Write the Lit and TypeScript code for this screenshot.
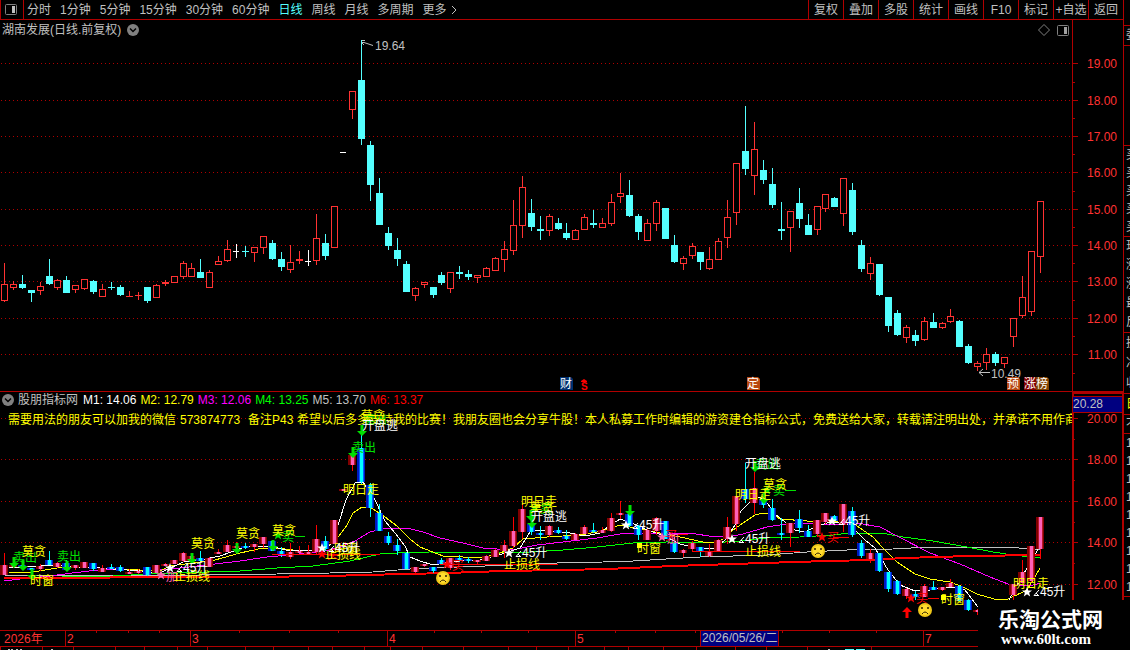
import { LitElement, html, svg, css } from "lit";
import { customElement } from "lit/decorators.js";
import { classMap } from "lit/directives/class-map.js";

type Kind = "r" | "c" | "w";
// wick top, body top, body bottom, wick bottom, kind (r = up, c = down, w = flat)
type Bar = [number, number, number, number, Kind];
type Mark = [number, number, string, string];

const BARS: Bar[] = [
  [263, 284, 301, 302, "r"], [281, 284, 288, 290, "r"], [275, 284, 288, 289, "c"], [290, 290, 293, 302, "c"],
  [282, 286, 291, 295, "r"], [259, 276, 284, 285, "c"], [279, 280, 288, 290, "r"], [276, 280, 293, 293, "c"],
  [285, 285, 290, 293, "r"], [279, 279, 289, 290, "r"], [280, 281, 292, 294, "c"], [284, 289, 297, 297, "r"],
  [282, 287, 288, 290, "c"], [285, 287, 295, 296, "c"], [291, 296, 297, 297, "r"], [292, 295, 296, 300, "r"],
  [287, 287, 301, 303, "c"], [284, 285, 298, 298, "r"], [280, 282, 284, 286, "r"], [276, 276, 283, 283, "r"],
  [261, 263, 277, 279, "r"], [263, 268, 277, 277, "r"], [259, 272, 278, 278, "c"], [270, 272, 288, 288, "r"],
  [256, 261, 265, 265, "r"], [240, 249, 261, 262, "r"], [244, 251, 252, 258, "w"], [246, 251, 252, 257, "c"],
  [247, 247, 253, 262, "r"], [236, 236, 248, 254, "r"], [240, 243, 259, 260, "c"], [252, 259, 267, 271, "c"],
  [245, 262, 270, 273, "r"], [251, 259, 261, 264, "r"], [250, 261, 262, 266, "w"], [214, 238, 261, 265, "r"],
  [234, 243, 256, 260, "c"], [206, 206, 248, 248, "r"], [152, 152, 153, 153, "w"], [91, 91, 110, 119, "r"],
  [40, 80, 139, 145, "c"], [141, 145, 185, 201, "c"], [178, 193, 225, 225, "c"], [227, 233, 246, 250, "c"],
  [238, 250, 259, 266, "c"], [261, 264, 292, 292, "c"], [287, 288, 296, 301, "r"], [282, 282, 285, 288, "r"],
  [287, 287, 295, 298, "c"], [272, 275, 283, 285, "c"], [272, 272, 289, 293, "r"], [266, 272, 274, 279, "c"],
  [270, 274, 277, 280, "c"], [275, 275, 278, 283, "r"], [267, 268, 277, 277, "r"], [257, 258, 271, 271, "r"],
  [241, 249, 260, 272, "r"], [200, 225, 251, 255, "r"], [176, 187, 226, 238, "r"], [199, 213, 227, 231, "c"],
  [216, 229, 231, 240, "c"], [214, 216, 231, 236, "r"], [218, 223, 229, 230, "c"], [223, 233, 238, 240, "c"],
  [229, 230, 240, 240, "r"], [214, 217, 230, 230, "r"], [210, 223, 225, 228, "c"], [218, 223, 228, 228, "r"],
  [194, 202, 224, 226, "r"], [173, 193, 197, 203, "r"], [180, 195, 216, 217, "c"], [214, 216, 232, 240, "c"],
  [219, 223, 241, 241, "r"], [200, 202, 224, 231, "r"], [208, 208, 239, 239, "c"], [235, 245, 262, 263, "c"],
  [256, 258, 264, 270, "r"], [243, 246, 256, 259, "r"], [252, 252, 262, 270, "c"], [247, 259, 269, 270, "r"],
  [238, 241, 260, 260, "r"], [200, 217, 238, 248, "r"], [163, 163, 213, 225, "r"], [106, 151, 169, 175, "c"],
  [122, 149, 176, 195, "r"], [160, 170, 180, 184, "c"], [168, 184, 205, 208, "c"], [202, 229, 231, 240, "c"],
  [211, 211, 228, 252, "r"], [188, 203, 219, 228, "c"], [214, 225, 235, 235, "c"], [206, 206, 230, 235, "r"],
  [194, 194, 209, 212, "r"], [197, 198, 207, 207, "c"], [178, 178, 214, 226, "r"], [183, 190, 232, 235, "c"],
  [240, 245, 269, 272, "c"], [257, 263, 274, 280, "r"], [264, 264, 295, 296, "c"], [297, 297, 326, 332, "c"],
  [310, 313, 335, 336, "c"], [325, 327, 338, 343, "r"], [330, 335, 341, 346, "c"], [317, 321, 340, 341, "r"],
  [313, 322, 328, 328, "c"], [322, 323, 328, 329, "r"], [309, 316, 322, 323, "r"], [320, 321, 347, 347, "c"],
  [344, 346, 363, 364, "c"], [361, 363, 367, 371, "r"], [348, 354, 363, 370, "r"], [352, 354, 363, 366, "c"],
  [357, 357, 364, 368, "r"], [318, 318, 337, 347, "r"], [276, 297, 316, 318, "r"], [251, 251, 312, 316, "r"],
  [201, 201, 257, 273, "r"],
];

const AVERAGES: [string, string][] = [
  ["m5", "5,575 110,575 200,575 277,574 330,573 373,572 410,569 457,567 513,565 557,563 603,562 633,561 700,557 767,555 807,552 847,550 893,549 930,547 1010,547 1027,549 1040,549"],
  ["m4", "62,577 113,576 150,574 207,572 240,571 277,568 313,566 350,561 380,554 397,553 430,552 480,553 530,552 563,550 597,547 633,543 667,542 710,543 740,541 767,538 800,537 833,535 850,533 887,534 903,537 933,541 967,547 993,552 1013,555 1040,558"],
  ["m3", "4,581 20,579 50,576 72,573 107,569 147,571 180,568 215,564 240,561 267,557 290,555 325,551 340,547 355,541 370,532 387,528 407,528 423,532 440,538 463,543 483,548 497,549 517,549 537,545 563,542 597,538 620,534 640,533 690,533 715,537 733,536 743,534 767,527 780,525 803,523 833,525 857,523 880,527 897,536 930,553 960,564 990,577 1008,584 1030,586 1040,583"],
  ["m2", "9,573 33,572 63,567 100,568 140,570 160,571 170,566 200,562 215,560 240,553 263,548 285,549 300,551 325,549 339,536 347,525 353,513 362,507 370,507 385,517 397,526 410,539 420,547 443,556 463,557 482,558 500,553 513,548 523,539 547,537 580,535 597,532 620,525 640,529 680,537 703,542 717,542 725,538 733,530 743,523 755,515 763,513 772,514 780,519 807,521 833,521 857,526 873,537 883,548 897,562 915,574 930,579 950,582 963,587 977,594 994,599 1008,599 1027,590 1033,580 1040,568"],
  ["m1", "9,568 40,566 55,565 75,567 100,568 140,571 160,573 183,562 200,560 220,556 245,547 270,546 290,551 317,550 330,545 339,522 346,500 355,483 363,482 375,500 385,521 395,533 405,546 410,557 420,561 433,565 445,563 460,561 480,560 495,556 505,553 520,548 530,532 540,530 550,531 570,533 585,536 600,533 612,524 620,519 630,522 640,527 650,531 665,536 680,544 700,549 715,548 725,540 735,525 741,511 750,502 756,496 765,500 775,514 785,522 795,530 805,532 815,527 830,522 845,523 855,530 865,540 875,548 888,570 900,585 915,591 930,590 950,587 965,590 978,607 1005,607 1020,580 1035,555 1040,545"],
  ["m6", "4,578 100,578 120,577 250,577 330,576 363,575 407,574 447,573 503,571 563,570 607,569 673,566 763,563 827,561 873,560 903,558 970,556 1040,555"],
];

// x, y, text, colour class
const LABELS: Mark[] = [
  [13, 557, "卖出", "green"], [22, 551, "莫贪", "yellow"], [30, 580, "时窗", "yellow"], [57, 556, "卖出", "green"],
  [166, 576, "加", "pink"], [174, 576, "止损线", "yellow"], [191, 543, "莫贪", "yellow"], [236, 533, "莫贪", "yellow"],
  [282, 536, "卖", "green"], [272, 530, "莫贪", "yellow"], [327, 554, "买", "red"], [325, 554, "止损线", "yellow"],
  [334, 548, "时窗", "yellow"], [363, 419, "卖出", "green"], [361, 415, "莫贪", "yellow"], [362, 425, "开盘逃", "white"],
  [352, 447, "卖出", "green"], [343, 489, "明日走", "yellow"], [452, 565, "买", "red"], [521, 501, "明日走", "yellow"],
  [540, 508, "卖", "green"], [530, 507, "莫贪", "yellow"], [531, 516, "开盘逃", "white"], [504, 564, "止损线", "yellow"],
  [665, 535, "买", "red"], [667, 538, "加", "pink"], [637, 548, "时窗", "yellow"], [755, 464, "卖出", "green"],
  [745, 463, "开盘逃", "white"], [773, 490, "卖", "green"], [763, 484, "莫贪", "yellow"], [735, 494, "明日走", "yellow"],
  [745, 551, "止损线", "yellow"], [827, 537, "买", "red"], [916, 598, "买", "red"], [941, 599, "时窗", "yellow"],
  [1013, 583, "明日走", "yellow"],
];
const STARS: [number, number, string][] = [
  [161, 575, "pink"], [278, 535, "green"], [322, 554, "red"], [447, 564, "red"], [535, 508, "green"],
  [662, 537, "pink"], [767, 490, "green"], [822, 537, "red"], [911, 598, "red"],
];
const RISES: [number, number][] = [[170, 568], [322, 548], [509, 553], [626, 525], [732, 539], [832, 521], [1027, 592]];
const ARROWS: [number, number][] = [
  [14, 563], [23, 566], [32, 575], [67, 567], [192, 559], [237, 549], [273, 546], [362, 431], [353, 453],
  [531, 516], [532, 523], [630, 511], [755, 467], [764, 499],
];
const FACES: [number, number][] = [[443, 578], [818, 551], [925, 610]];
const RAYS: [number, number, number, string][] = [
  [272, 380, 554, "red"], [440, 558, 564, "red"], [668, 688, 534, "red"], [692, 800, 551, "red"],
  [833, 849, 537, "red"], [928, 939, 598, "red"], [295, 305, 536, "green"], [785, 796, 490, "green"],
];
const NOTE: [number, string][] = [
  [8, "需要用法的朋友可以加我的微信"],
  [180, "573874773"],
  [248, "备注P43"],
  [297, "希望以后多多支持我的比赛！我朋友圈也会分享牛股！本人私募工作时编辑的游资建仓指标公式，免费送给大家，转载请注明出处，并承诺不用作商"],
];
const BADGES: Mark[] = [
  [560, 377, "财", "#003070"], [747, 377, "定", "#b84810"], [1007, 377, "预", "#b84810"],
  [1024, 377, "涨", "#800000"], [1036, 377, "榜", "#804000"],
];
const PRICE_GRID = [63, 100, 136, 172, 209, 245, 281, 318, 354];
const STUDY_GRID = [418, 459, 501, 542, 584];
const PERIODS = ["分时", "1分钟", "5分钟", "15分钟", "30分钟", "60分钟", "日线", "周线", "月线", "多周期"];
const TOOLS = ["复权", "叠加", "多股", "统计", "画线", "F10", "标记", "+自选", "返回"];
const READOUTS: [string, string][] = [
  ["M1: 14.06", "white"], ["M2: 12.79", "yellow"], ["M3: 12.06", "magenta"],
  ["M4: 13.25", "lime"], ["M5: 13.70", "silver"], ["M6: 13.37", "red"],
];
const MONTHS: [number, string][] = [[65, "2"], [190, "3"], [387, "4"], [575, "5"], [923, "7"]];
const WEEK_TICKS = [96, 128, 159, 239, 289, 338, 434, 481, 528, 615, 655, 695, 782, 829, 876];
const FOOT_TICKS = [0, 42, 73, 115, 144, 177, 207, 245, 273, 308, 332, 364, 390, 422, 463, 508, 536, 568, 604, 628, 663, 696, 735, 766, 807, 871];

const barX = (i: number) => Math.floor(4.4 + 8.93 * i);
const toStudy = (y: number) => Math.round(438.8 + (y - 63.3) * 0.5714);
const STAR = "M0 -5 1.3 -1.6 5 -1.6 2.1 .7 3.2 4.4 0 2.2 -3.2 4.4 -2.1 .7 -5 -1.6 -1.3 -1.6Z";

const chevronBadge = html`<svg class="round" width="12" height="12" viewBox="0 0 12 12" aria-hidden="true">
  <circle cx="6" cy="6" r="6" fill="#808080"></circle>
  <path d="M3 4.5 6 7.5 9 4.5" fill="none" stroke="#000" stroke-width="1.5"></path>
</svg>`;

@customElement("price-chart")
export class PriceChart extends LitElement {
  static styles = css`
    :host { display: block; background: #000; }
    svg { display: block; width: 100%; overflow: hidden; }
    .crisp { shape-rendering: crispEdges; }
    .grid { stroke: #b00000; stroke-dasharray: 1 3; }
    .r { fill: #ff3232; } .c { fill: #54ffff; } .w { fill: #fff; }
    .hollow { fill: #000; stroke: #ff3232; }
    text { font: 12px "Liberation Sans", "Noto Sans CJK SC", sans-serif; fill: #c0c0c0; }
    .badge { fill: #fff; }
    .dollar { fill: #f00; font-size: 10px; font-weight: bold; }
    .pointer { fill: none; stroke: #c0c0c0; }
  `;

  private bar([hi, top, bot, lo, kind]: Bar, i: number) {
    const x = barX(i);
    const hollow = kind === "r" && bot - top > 2;
    return svg`<g>
      <rect class=${kind} x=${x} y=${hi} width="1" height=${lo - hi}></rect>
      ${hollow
        ? svg`<rect class="hollow" x=${x - 2.5} y=${top + 0.5} width="6" height=${bot - top - 1}></rect>`
        : svg`<rect class=${kind} x=${x - 3} y=${top} width=${kind === "w" ? 6 : 7} height=${bot - top}></rect>`}
    </g>`;
  }

  render() {
    return html`<svg height="351" role="img" aria-label="日线">
      <g transform="translate(0 -40)">
        <g class="crisp">
          ${PRICE_GRID.map((y) => svg`<line class="grid" x1="1" x2="100%" y1=${y + 0.5} y2=${y + 0.5}></line>`)}
          ${BARS.map((b, i) => this.bar(b, i))}
        </g>
        <path class="pointer" d="M362 40.5h3M362 42.5h2l9 3M362 43l2 2"></path>
        <text x="375" y="50">19.64</text>
        <path class="pointer" d="M990 372.5H979M983 369l-4 3.5 4 3.5"></path>
        <text x="991" y="378">10.49</text>
        ${BADGES.map(([x, y, t, c]) => svg`<g>
          <path d="M${x} ${y}h11l2 2v11h-13z" fill=${c}></path>
          <text class="badge" x=${x} y=${y + 11}>${t}</text></g>`)}
        <path d="M581 381l3-2 3 2v1h-6z" fill="#f00"></path>
        <text class="dollar" x="581" y="390">S</text>
      </g>
    </svg>`;
  }
}

@customElement("study-chart")
export class StudyChart extends LitElement {
  static styles = css`
    :host { display: block; background: #000; }
    svg { display: block; width: 100%; overflow: hidden; }
    .crisp { shape-rendering: crispEdges; }
    .grid { stroke: #b00000; stroke-dasharray: 1 3; }
    text { font: 12px "Liberation Sans", "Noto Sans CJK SC", sans-serif; }
    .note { fill: #ff0; }
    polyline { fill: none; }
    .m1 { stroke: #fff; } .m2 { stroke: #ff0; } .m3 { stroke: #f0f; }
    .m4 { stroke: #0f0; } .m5 { stroke: #c0c0c0; } .m6 { stroke: #f00; stroke-width: 2; }
    .green { fill: #00e000; } .yellow { fill: #ff0; } .red { fill: #f00; }
    .white { fill: #fff; } .pink { fill: #ff60b0; }
    .up-edge { fill: #800000; } .up-mid { fill: #b81828; } .up-core { fill: #ff60b8; } .up-wick { fill: #f00; }
    .down-edge { fill: #0018c0; } .down-mid { fill: #0060ff; } .down-core { fill: #00ffff; } .down-wick { fill: #00ffff; }
    .angle { fill: none; stroke: #fff; }
  `;

  private bar([hi, top, bot, lo, kind]: Bar, i: number) {
    const x = barX(i);
    const dir = kind === "c" ? "down" : "up";
    const y = toStudy(top);
    const h = Math.max(2, toStudy(bot) - y);
    const wick = toStudy(hi);
    return svg`<g>
      <rect class="${dir}-wick" x=${x} y=${wick} width="1" height=${Math.max(1, toStudy(lo) - wick)}></rect>
      <rect class="${dir}-edge" x=${x - 4} y=${y} width="8" height=${h}></rect>
      <rect class="${dir}-mid" x=${x - 2} y=${y} width="5" height=${h}></rect>
      <rect class="${dir}-core" x=${x - 1} y=${y} width="3" height=${h}></rect>
    </g>`;
  }

  render() {
    return html`<svg height="222" role="img" aria-label="股朋指标网">
      <g transform="translate(0 -408)">
        <g class="crisp">
          ${STUDY_GRID.map((y) => svg`<line class="grid" x1="1" x2="100%" y1=${y + 0.5} y2=${y + 0.5}></line>`)}
          ${AVERAGES.map(([c, p]) => svg`<polyline class=${c} points=${p}></polyline>`)}
          ${BARS.map((b, i) => this.bar(b, i))}
          ${RAYS.map(([a, b, y, c]) => svg`<rect class=${c} x=${a} y=${y} width=${b - a} height="1"></rect>`)}
        </g>
        ${NOTE.map(([x, t]) => svg`<text class="note" x=${x} y="424">${t}</text>`)}
        ${ARROWS.map(([x, y]) => svg`<path class="green" transform="translate(${x} ${y})" d="M-1.5 -6h3V0H5L0 5 -5 0h3.500z"></path>`)}
        <path class="red" d="M907 607l5 5h-3.500v6h-3v-6h-3.500z"></path>
        <rect class="yellow" x="637" y="543" width="5" height="5"></rect>
        <rect class="yellow" x="941" y="595" width="5" height="5"></rect>
        ${STARS.map(([x, y, c]) => svg`<path class=${c} transform="translate(${x} ${y})" d=${STAR}></path>`)}
        ${LABELS.map(([x, y, t, c]) => svg`<text class=${c} x=${x} y=${y + 5}>${t}</text>`)}
        ${RISES.map(([x, y]) => svg`<g transform="translate(${x} ${y})">
          <path class="white" d=${STAR}></path>
          <path class="angle" d="M12 -2 7 3.500h5M9 1l2 2"></path>
          <text class="white" x="13" y="4">45升</text></g>`)}
        ${FACES.map(([x, y]) => svg`<g transform="translate(${x} ${y})">
          <circle r="7" fill="#f0c818"></circle><circle r="5" fill="#ffdc30"></circle>
          <circle cx="-3" cy="-2" r="1" fill="#302000"></circle><circle cx="3" cy="-2" r="1" fill="#302000"></circle>
          <path d="M-3 4Q0 0 3 4" fill="none" stroke="#302000"></path></g>`)}
      </g>
    </svg>`;
  }
}

@customElement("value-scale")
export class ValueScale extends LitElement {
  static styles = css`
    :host { display: block; background: #000; }
    svg { display: block; width: 100%; overflow: hidden; }
    .rule { fill: #b00000; shape-rendering: crispEdges; }
    .cursor { fill: #000080; }
    text { font: 12px "Liberation Sans", sans-serif; fill: #ff3232; text-anchor: end; }
    .cursor-value { fill: #c0c0c0; text-anchor: start; }
  `;

  private scale(ys: number[], first: number, step: number) {
    return ys.map((y, i) => svg`
      <rect class="rule" x="1" y=${y} width="5" height="1"></rect>
      <rect class="rule" x="1" y=${Math.round((y + (ys[i + 1] ?? y + 37)) / 2)} width="2" height="1"></rect>
      <text x="45" y=${y + 5}>${(first - i * step).toFixed(2)}</text>`);
  }

  render() {
    return html`<svg height="610" role="img" aria-label="坐标">
      <g transform="translate(0 -20)">
        <rect class="rule" x="0" y="20" width="1" height="610"></rect>
        ${this.scale(PRICE_GRID, 19, 1)}
        ${this.scale(STUDY_GRID, 20, 2)}
        <rect class="rule" x="0" y="391" width="51" height="3"></rect>
        <rect class="rule" x="0" y="391" width="2" height="239"></rect>
        <rect class="rule" x="50" y="391" width="1" height="239"></rect>
        <rect class="rule" x="0" y="396" width="51" height="17"></rect>
        <rect class="cursor" x="1" y="397" width="49" height="15"></rect>
        <text class="cursor-value" x="1" y="408">20.28</text>
      </g>
    </svg>`;
  }
}

@customElement("quote-strip")
export class QuoteStrip extends LitElement {
  static styles = css`
    :host { display: block; overflow: hidden; border-left: 1px solid #b00000; color: #c0c0c0;
      font: 12px/18px "Liberation Sans", "Noto Sans CJK SC", sans-serif; white-space: nowrap; }
    .cell { border-bottom: 1px solid #b00000; padding-left: 2px; }
    .top { height: 25px; }
    .gap { height: 99px; }
    .head { line-height: 19px; }
    .lit { color: #ff0; line-height: 20px; }
    .row { display: block; }
    .tall { line-height: 19px; }
    .loose { line-height: 20px; }
  `;

  private rows(text: string) {
    return [...text].map((t) => html`<span class="row">${t}</span>`);
  }

  render() {
    return html`
      <div class="cell top"></div>
      <div class="cell head">委</div>
      <div class="cell gap"></div>
      <div class="cell">${this.rows("买买买买买")}</div>
      <div class="cell tall">${this.rows("现涨涨最反")}</div>
      <div class="cell loose">${this.rows("换净收")}</div>
      <div class="cell lit">日</div>
      <div class="cell">不</div>
      <div class="cell">${this.rows("111111111")}</div>`;
  }
}

@customElement("app-root")
export class AppRoot extends LitElement {
  static styles = css`
    :host { display: grid; grid-template-columns: minmax(0, 1fr) 7px; position: relative; height: 100vh; overflow: hidden;
      background: #000; color: #c0c0c0; font: 12px/18px "Liberation Sans", "Noto Sans CJK SC", sans-serif; }
    .main { display: flex; flex-direction: column; min-width: 0; }
    .bar { display: flex; height: 19px; border-bottom: 1px solid #b00000; flex: none; }
    button { all: unset; cursor: pointer; white-space: nowrap; line-height: 18px; }
    .dock { display: flex; align-items: center; width: 19px; padding-left: 3px; border: solid #b00000; border-width: 0 1px; }
    .periods { display: flex; gap: 9px; padding-left: 3px; flex: 1; min-width: 0; overflow: hidden; }
    .periods .active { color: #54ffff; }
    .more { display: flex; align-items: center; gap: 4px; }
    .tools { display: grid; grid-template-columns: repeat(9, 35px); }
    .tool { border-left: 1px solid #b00000; text-align: center; }
    .work { display: grid; grid-template-columns: minmax(0, 1fr) 51px; flex: none; }
    .title { display: flex; align-items: center; gap: 6px; height: 20px; padding: 0 3px 0 2px; }
    .fill { flex: 1; }
    .corner { display: flex; align-items: center; gap: 7px; }
    .study { border-top: 1px solid #b00000; }
    .readouts { display: flex; align-items: center; height: 16px; padding-left: 2px; gap: 4px; white-space: nowrap; }
    .round { display: block; flex: none; }
    .name { min-width: 61px; }
    .white { color: #fff; } .yellow { color: #ff0; } .magenta { color: #f0f; }
    .lime { color: #0f0; } .silver { color: #c0c0c0; } .red { color: #f00; }
    .dates { display: block; width: 100%; flex: none; }
    .rule { fill: #b00000; shape-rendering: crispEdges; }
    .faint { fill: #c0c0c0; shape-rendering: crispEdges; }
    .aqua { fill: #54ffff; shape-rendering: crispEdges; }
    .cursor { fill: #000080; stroke: #b00000; shape-rendering: crispEdges; }
    .month { font: 12px "Liberation Sans", "Noto Sans CJK SC", sans-serif; fill: #ff3232; }
    .day { font: 12px "Liberation Sans", "Noto Sans CJK SC", sans-serif; fill: #c0c0c0; }
    .brand { position: absolute; right: 0; bottom: 0; width: 132px; height: 46px; padding: 4px 0 0 20px; background: #000; color: #fff; }
    .brand-name { display: block; font: bold 21px/28px "Noto Sans CJK SC", sans-serif; }
    .brand-url { display: block; padding-left: 3px; font: bold 15px/14px "Liberation Serif", serif; color: #fff; text-decoration: none; }
  `;

  private dates() {
    return html`<svg class="dates" height="20" role="img" aria-label="日期">
      <rect class="rule" x="0" y="0" width="100%" height="1"></rect>
      <rect class="rule" x="0" y="16" width="100%" height="1"></rect>
      ${MONTHS.map(([x, t]) => svg`<rect class="rule" x=${x} y="0" width="1" height="16"></rect>
        <text class="month" x=${x + 2} y="13">${t}</text>`)}
      ${WEEK_TICKS.map((x) => svg`<rect class="rule" x=${x} y="1" width="1" height="2"></rect>`)}
      ${FOOT_TICKS.map((x) => svg`<rect class="rule" x=${x} y="17" width="1" height="3"></rect>`)}
      ${[8, 11, 16, 20, 51, 828].map((x) => svg`<rect class="faint" x=${x} y="19" width="2" height="1"></rect>`)}
      ${[845, 856].map((x) => svg`<rect class="aqua" x=${x} y="19" width="9" height="1"></rect>`)}
      <text class="month" x="4" y="13">2026年</text>
      <rect class="cursor" x="700.5" y="0.5" width="78" height="16"></rect>
      <text class="day" x="702" y="12">2026/05/26/二</text>
    </svg>`;
  }

  render() {
    return html`
      <div class="main">
        <header class="bar">
          <button class="dock" aria-label="侧栏">
            <svg width="14" height="12" viewBox="0 0 14 12">
              <rect x="1.5" y=".5" width="11" height="10" rx="1" fill="none" stroke="#808080"></rect>
              <rect x="8" y="2" width="3" height="7" fill="#c0c0c0"></rect>
            </svg>
          </button>
          <nav class="periods">
            ${PERIODS.map((p) => html`<button class=${classMap({ active: p === "日线" })}>${p}</button>`)}
            <button class="more">更多<svg width="6" height="10" viewBox="0 0 6 10"><path d="M1 1l4 4-4 4" fill="none" stroke="#c0c0c0"></path></svg></button>
          </nav>
          <div class="tools">${TOOLS.map((t) => html`<button class="tool">${t}</button>`)}</div>
        </header>
        <div class="work">
          <div class="panes">
            <div class="title">
              <span>湖南发展(日线.前复权)</span>${chevronBadge}
              <span class="fill"></span>
              <span class="corner">
                <svg width="12" height="12" viewBox="0 0 12 12"><path d="M6 .5 11.500 6 6 11.500 .5 6Z" fill="none" stroke="#808080"></path></svg>
                <svg width="12" height="11" viewBox="0 0 12 11">
                  <rect x=".5" y=".5" width="11" height="10" rx="1" fill="none" stroke="#808080"></rect>
                  <rect x="7" y="2" width="3" height="7" fill="#a0a0a0"></rect>
                </svg>
              </span>
            </div>
            <price-chart></price-chart>
            <div class="study">
              <div class="readouts">
                ${chevronBadge}<span class="name">股朋指标网</span>
                ${READOUTS.map(([t, c]) => html`<span class=${c}>${t}</span>`)}
              </div>
              <study-chart></study-chart>
            </div>
          </div>
          <value-scale></value-scale>
        </div>
        ${this.dates()}
      </div>
      <quote-strip></quote-strip>
      <div class="brand">
        <span class="brand-name">乐淘公式网</span>
        <a class="brand-url" href="#">www.60lt.com</a>
      </div>`;
  }
}
